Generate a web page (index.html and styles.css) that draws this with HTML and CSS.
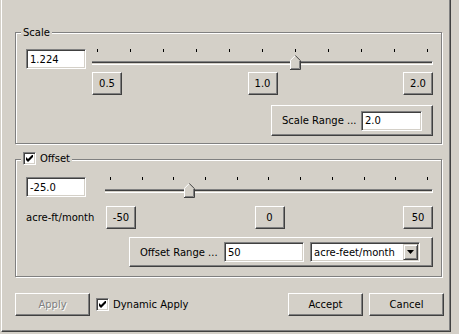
FILE: index.html
```html
<!DOCTYPE html>
<html lang="en">
<head>
    <meta charset="UTF-8">
    <title>Scale / Offset</title>
    <link rel="stylesheet" href="styles.css">
</head>
<body>

<div class="dialog">

    <!-- Scale -->
    <div class="group group-scale">
        <span class="group-title">Scale</span>

        <div class="row">
            <input class="field field-value" type="text" value="1.224">
            <div class="slider slider-scale">
                <div class="ticks">
                    <i></i><i></i><i></i><i></i><i></i><i></i><i></i><i></i><i></i><i></i><i></i>
                </div>
                <div class="track"></div>
                <svg class="thumb" style="left: 198px" width="11" height="15" viewBox="0 0 11 15">
                    <polygon points="0,5 5,0 11,6 11,15 0,15" fill="#d4d0c8"/>
                    <polyline points="0.5,14 0.5,5.3 5.3,0.5" fill="none" stroke="#fff"/>
                    <polyline points="5.3,0.5 10.5,5.7 10.5,14.5 0,14.5" fill="none" stroke="#404040"/>
                    <polyline points="9.5,6 9.5,13.5 1,13.5" fill="none" stroke="#808080"/>
                </svg>
            </div>
        </div>

        <div class="row marks marks-scale">
            <button class="btn btn-mark">0.5</button>
            <button class="btn btn-mark">1.0</button>
            <button class="btn btn-mark">2.0</button>
        </div>

        <div class="row row-end range-row-scale">
            <div class="panel panel-scale">
                <span>Scale Range ...</span>
                <input class="field field-range" type="text" value="2.0">
            </div>
        </div>
    </div>

    <!-- Offset -->
    <div class="group group-offset">
        <span class="group-title">
            <span class="check">
                <svg width="7" height="7" viewBox="0 0 7 7"><path d="M0 2 L2 4 L6 0 L7 0 L7 2 L2 7 L0 5 Z" fill="#000"/></svg>
            </span>
            Offset
        </span>

        <div class="row">
            <input class="field field-value" type="text" value="-25.0">
            <div class="slider slider-offset">
                <div class="ticks">
                    <i></i><i></i><i></i><i></i><i></i><i></i><i></i><i></i><i></i><i></i><i></i>
                </div>
                <div class="track"></div>
                <svg class="thumb" style="left: 79px" width="11" height="15" viewBox="0 0 11 15">
                    <polygon points="0,5 5,0 11,6 11,15 0,15" fill="#d4d0c8"/>
                    <polyline points="0.5,14 0.5,5.3 5.3,0.5" fill="none" stroke="#fff"/>
                    <polyline points="5.3,0.5 10.5,5.7 10.5,14.5 0,14.5" fill="none" stroke="#404040"/>
                    <polyline points="9.5,6 9.5,13.5 1,13.5" fill="none" stroke="#808080"/>
                </svg>
            </div>
        </div>

        <div class="row unit-row">
            <span class="unit">acre-ft/month</span>
            <div class="marks marks-offset">
                <button class="btn btn-mark">-50</button>
                <button class="btn btn-mark">0</button>
                <button class="btn btn-mark">50</button>
            </div>
        </div>

        <div class="row row-end range-row-offset">
            <div class="panel panel-offset">
                <span>Offset Range ...</span>
                <input class="field field-offset" type="text" value="50">
                <div class="combo">
                    <span>acre-feet/month</span>
                    <span class="combo-btn">
                        <svg width="7" height="4" viewBox="0 0 7 4"><path d="M0 0 H7 L3.5 4 Z" fill="#000"/></svg>
                    </span>
                </div>
            </div>
        </div>
    </div>

    <!-- bottom buttons -->
    <div class="actions">
        <button class="btn btn-action" disabled>Apply</button>
        <label class="dyn">
            <span class="check">
                <svg width="7" height="7" viewBox="0 0 7 7"><path d="M0 2 L2 4 L6 0 L7 0 L7 2 L2 7 L0 5 Z" fill="#000"/></svg>
            </span>
            Dynamic Apply
        </label>
        <button class="btn btn-action btn-accept">Accept</button>
        <button class="btn btn-action">Cancel</button>
    </div>

</div>

</body>
</html>
```

FILE: styles.css
```css
body, html {
    margin: 0;
    padding: 0;
    background-color: #d4d0c8;
    font-family: "DejaVu Sans", Verdana, sans-serif;
    font-size: 10px;
    line-height: 13px;
    color: #000;
}
.dialog {
    box-sizing: border-box;
    width: 450px;
    height: 332px;
    margin-left: 1px;
    padding: 32px 0 0 13px;
    border-left: 1px solid #fff;
    border-right: 1px solid #404040;
    border-bottom: 1px solid #404040;
    box-shadow: inset -1px -1px 0 #808080;
}
.group {
    position: relative;
    box-sizing: border-box;
    width: 427px;
    border: 1px solid #808080;
    box-shadow: 1px 1px 0 #fff, inset 1px 1px 0 #fff;
    padding-left: 10px;
}
.group-scale {
    height: 112px;
    padding-top: 16px;
}
.group-offset {
    height: 118px;
    margin-top: 15px;
    padding-top: 17px;
}
.group-title {
    position: absolute;
    top: -7px;
    left: 5px;
    padding: 0 2px;
    background-color: #d4d0c8;
    display: flex;
    align-items: center;
}
.group-offset .group-title {
    top: -8px;
}
.row {
    display: flex;
    width: 407px;
}
.row-end {
    justify-content: flex-end;
}

/* text fields */
.field {
    box-sizing: border-box;
    height: 20px;
    margin: 0;
    padding: 0 3px;
    border: 1px solid;
    border-color: #808080 #fff #fff #808080;
    box-shadow: inset 1px 1px 0 #404040, inset -1px -1px 0 #d4d0c8;
    background-color: #fff;
    font-family: inherit;
    font-size: 10px;
    color: #000;
    outline: none;
}
.field-value {
    width: 60px;
}
.field-range {
    width: 61px;
    margin-left: auto;
}
.field-offset {
    width: 80px;
    margin-left: auto;
}

/* sliders */
.slider {
    position: relative;
    height: 20px;
}
.slider-scale {
    width: 341px;
    margin-left: 6px;
}
.slider-offset {
    width: 328px;
    margin-left: 19px;
}
.ticks {
    display: flex;
    justify-content: space-between;
    padding: 0 5px;
    height: 3px;
}
.ticks i {
    width: 1px;
    height: 3px;
    background-color: #000;
}
.track {
    box-sizing: border-box;
    height: 4px;
    margin-top: 9px;
    border-top: 1px solid #808080;
    border-bottom: 1px solid #fff;
    border-right: 1px solid #fff;
    box-shadow: inset 0 1px 0 #404040;
}
.thumb {
    position: absolute;
    top: 6px;
    display: block;
}

/* buttons */
.btn {
    box-sizing: border-box;
    height: 23px;
    margin: 0;
    padding: 0;
    border: 1px solid;
    border-color: #fff #404040 #404040 #fff;
    box-shadow: inset -1px -1px 0 #808080;
    background-color: #d4d0c8;
    font-family: inherit;
    font-size: 10px;
    color: #000;
}
.btn-mark {
    width: 30px;
}
.marks {
    justify-content: space-between;
}
.marks-scale {
    width: 341px;
    margin-left: 66px;
    margin-top: 3px;
}

.range-row-scale {
    margin-top: 10px;
}
.panel {
    box-sizing: border-box;
    display: flex;
    align-items: center;
    border: 1px solid;
    border-color: #fff #404040 #404040 #fff;
    box-shadow: inset -1px -1px 0 #808080;
}
.panel-scale {
    width: 162px;
    height: 31px;
    padding: 0 10px 0 10px;
}
.panel-offset {
    width: 304px;
    height: 30px;
    padding: 0 12px 0 10px;
}

.unit-row {
    margin-top: 9px;
    align-items: center;
}
.unit {
    width: 80px;
}
.marks-offset {
    display: flex;
    flex: 1;
}
.range-row-offset {
    margin-top: 8px;
}
.combo {
    box-sizing: border-box;
    display: flex;
    align-items: center;
    justify-content: space-between;
    width: 110px;
    height: 20px;
    margin-left: 6px;
    padding: 0 1px 0 3px;
    border: 1px solid;
    border-color: #808080 #fff #fff #808080;
    box-shadow: inset 1px 1px 0 #404040, inset -1px -1px 0 #d4d0c8;
    background-color: #fff;
}
.combo-btn {
    box-sizing: border-box;
    display: flex;
    align-items: center;
    justify-content: center;
    width: 15px;
    height: 16px;
    border: 1px solid;
    border-color: #d4d0c8 #404040 #404040 #d4d0c8;
    box-shadow: inset 1px 1px 0 #fff, inset -1px -1px 0 #808080;
    background-color: #d4d0c8;
}

/* checkboxes */
.check {
    box-sizing: border-box;
    display: flex;
    align-items: center;
    justify-content: center;
    width: 13px;
    height: 13px;
    margin-right: 4px;
    border: 1px solid;
    border-color: #808080 #fff #fff #808080;
    box-shadow: inset 1px 1px 0 #404040, inset -1px -1px 0 #d4d0c8;
    background-color: #fff;
}

/* bottom row */
.actions {
    display: flex;
    align-items: center;
    width: 429px;
    margin-top: 16px;
}
.btn-action {
    width: 75px;
}
.btn-action + .btn-action {
    margin-left: 6px;
}
.btn[disabled] {
    color: #808080;
    text-shadow: 1px 1px 0 #fff;
}
.dyn {
    display: flex;
    align-items: center;
    margin-left: 6px;
}
.btn-accept {
    margin-left: auto;
}
```
